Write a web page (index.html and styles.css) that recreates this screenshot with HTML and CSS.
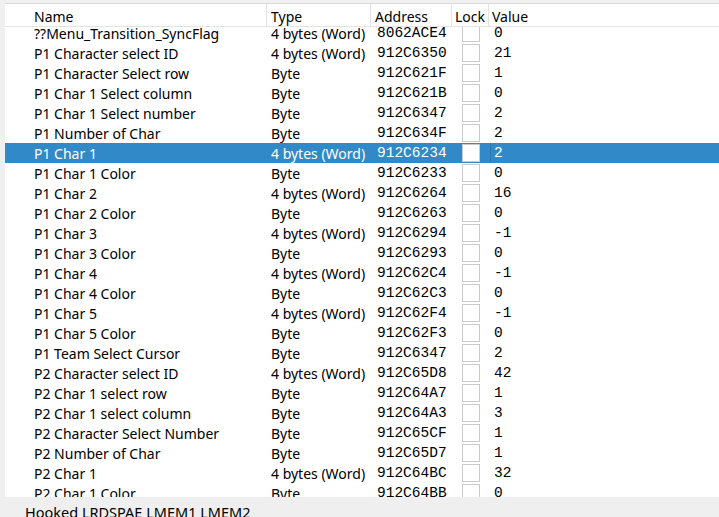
FILE: index.html
```html
<!DOCTYPE html>
<html>
<head>
<meta charset="utf-8">
<link rel="stylesheet" href="styles.css">
</head>
<body>
<div class="window">
  <div class="list">
    <div class="header">
      <div class="hcell c-name">Name</div>
      <div class="hcell c-type">Type</div>
      <div class="hcell c-addr">Address</div>
      <div class="hcell c-lock">Lock</div>
      <div class="hcell c-val">Value</div>
    </div>
    <div class="body">
      <div class="rows">
        <div class="row"><div class="cell c-name">??Menu_Transition_SyncFlag</div><div class="cell c-type">4 bytes (Word)</div><div class="cell c-addr">8062ACE4</div><div class="cell c-lock"><span class="box"></span></div><div class="cell c-val">0</div></div>
        <div class="row"><div class="cell c-name">P1 Character select ID</div><div class="cell c-type">4 bytes (Word)</div><div class="cell c-addr">912C6350</div><div class="cell c-lock"><span class="box"></span></div><div class="cell c-val">21</div></div>
        <div class="row"><div class="cell c-name">P1 Character Select row</div><div class="cell c-type">Byte</div><div class="cell c-addr">912C621F</div><div class="cell c-lock"><span class="box"></span></div><div class="cell c-val">1</div></div>
        <div class="row"><div class="cell c-name">P1 Char 1 Select column</div><div class="cell c-type">Byte</div><div class="cell c-addr">912C621B</div><div class="cell c-lock"><span class="box"></span></div><div class="cell c-val">0</div></div>
        <div class="row"><div class="cell c-name">P1 Char 1 Select number</div><div class="cell c-type">Byte</div><div class="cell c-addr">912C6347</div><div class="cell c-lock"><span class="box"></span></div><div class="cell c-val">2</div></div>
        <div class="row"><div class="cell c-name">P1 Number of Char</div><div class="cell c-type">Byte</div><div class="cell c-addr">912C634F</div><div class="cell c-lock"><span class="box"></span></div><div class="cell c-val">2</div></div>
        <div class="row selected"><div class="cell c-name">P1 Char 1</div><div class="cell c-type">4 bytes (Word)</div><div class="cell c-addr">912C6234</div><div class="cell c-lock"><span class="box"></span></div><div class="cell c-val focus">2</div></div>
        <div class="row"><div class="cell c-name">P1 Char 1 Color</div><div class="cell c-type">Byte</div><div class="cell c-addr">912C6233</div><div class="cell c-lock"><span class="box"></span></div><div class="cell c-val">0</div></div>
        <div class="row"><div class="cell c-name">P1 Char 2</div><div class="cell c-type">4 bytes (Word)</div><div class="cell c-addr">912C6264</div><div class="cell c-lock"><span class="box"></span></div><div class="cell c-val">16</div></div>
        <div class="row"><div class="cell c-name">P1 Char 2 Color</div><div class="cell c-type">Byte</div><div class="cell c-addr">912C6263</div><div class="cell c-lock"><span class="box"></span></div><div class="cell c-val">0</div></div>
        <div class="row"><div class="cell c-name">P1 Char 3</div><div class="cell c-type">4 bytes (Word)</div><div class="cell c-addr">912C6294</div><div class="cell c-lock"><span class="box"></span></div><div class="cell c-val">-1</div></div>
        <div class="row"><div class="cell c-name">P1 Char 3 Color</div><div class="cell c-type">Byte</div><div class="cell c-addr">912C6293</div><div class="cell c-lock"><span class="box"></span></div><div class="cell c-val">0</div></div>
        <div class="row"><div class="cell c-name">P1 Char 4</div><div class="cell c-type">4 bytes (Word)</div><div class="cell c-addr">912C62C4</div><div class="cell c-lock"><span class="box"></span></div><div class="cell c-val">-1</div></div>
        <div class="row"><div class="cell c-name">P1 Char 4 Color</div><div class="cell c-type">Byte</div><div class="cell c-addr">912C62C3</div><div class="cell c-lock"><span class="box"></span></div><div class="cell c-val">0</div></div>
        <div class="row"><div class="cell c-name">P1 Char 5</div><div class="cell c-type">4 bytes (Word)</div><div class="cell c-addr">912C62F4</div><div class="cell c-lock"><span class="box"></span></div><div class="cell c-val">-1</div></div>
        <div class="row"><div class="cell c-name">P1 Char 5 Color</div><div class="cell c-type">Byte</div><div class="cell c-addr">912C62F3</div><div class="cell c-lock"><span class="box"></span></div><div class="cell c-val">0</div></div>
        <div class="row"><div class="cell c-name">P1 Team Select Cursor</div><div class="cell c-type">Byte</div><div class="cell c-addr">912C6347</div><div class="cell c-lock"><span class="box"></span></div><div class="cell c-val">2</div></div>
        <div class="row"><div class="cell c-name">P2 Character select ID</div><div class="cell c-type">4 bytes (Word)</div><div class="cell c-addr">912C65D8</div><div class="cell c-lock"><span class="box"></span></div><div class="cell c-val">42</div></div>
        <div class="row"><div class="cell c-name">P2 Char 1 select row</div><div class="cell c-type">Byte</div><div class="cell c-addr">912C64A7</div><div class="cell c-lock"><span class="box"></span></div><div class="cell c-val">1</div></div>
        <div class="row"><div class="cell c-name">P2 Char 1 select column</div><div class="cell c-type">Byte</div><div class="cell c-addr">912C64A3</div><div class="cell c-lock"><span class="box"></span></div><div class="cell c-val">3</div></div>
        <div class="row"><div class="cell c-name">P2 Character Select Number</div><div class="cell c-type">Byte</div><div class="cell c-addr">912C65CF</div><div class="cell c-lock"><span class="box"></span></div><div class="cell c-val">1</div></div>
        <div class="row"><div class="cell c-name">P2 Number of Char</div><div class="cell c-type">Byte</div><div class="cell c-addr">912C65D7</div><div class="cell c-lock"><span class="box"></span></div><div class="cell c-val">1</div></div>
        <div class="row"><div class="cell c-name">P2 Char 1</div><div class="cell c-type">4 bytes (Word)</div><div class="cell c-addr">912C64BC</div><div class="cell c-lock"><span class="box"></span></div><div class="cell c-val">32</div></div>
        <div class="row"><div class="cell c-name">P2 Char 1 Color</div><div class="cell c-type">Byte</div><div class="cell c-addr">912C64BB</div><div class="cell c-lock"><span class="box"></span></div><div class="cell c-val">0</div></div>
      </div>
    </div>
  </div>
  <div class="status">Hooked LRDSPAE LMEM1 LMEM2</div>
</div>
</body>
</html>
```
FILE: styles.css
```css
html, body {
  margin: 0;
  padding: 0;
  width: 719px;
  height: 517px;
  overflow: hidden;
  background: #f0f0f0;
}
.window {
  display: flex;
  flex-direction: column;
  height: 517px;
  font-family: "Noto Sans", "Open Sans", sans-serif;
  font-size: 14px;
  color: #000;
}
.list {
  margin: 3px 0 0 5px;
  height: 493px;
  display: flex;
  flex-direction: column;
  background: #fff;
  border-top: 1px solid #dadada;
  overflow: hidden;
  flex: none;
}
.header {
  display: grid;
  grid-template-columns: 262px 104px 81px 37px 1fr;
  height: 22px;
  border-bottom: 1px solid #e3e3e3;
  background: #fff;
  position: relative;
  z-index: 1;
  flex: none;
}
.hcell {
  line-height: 19px;
  padding-top: 3px;
  padding-left: 3px;
  border-right: 1px solid #e3e3e3;
  white-space: nowrap;
  overflow: hidden;
}
.hcell.c-type, .hcell.c-addr { padding-left: 4px; }
.hcell.c-val { border-right: none; }
.body {
  flex: 1;
  overflow: hidden;
}
.rows {
  margin-top: -4px;
}
.row {
  display: grid;
  grid-template-columns: 262px 104px 81px 37px 1fr;
  height: 20px;
}
.cell {
  white-space: nowrap;
  overflow: hidden;
  padding-top: 1px;
  line-height: 19px;
}
.c-name { padding-left: 29px; }
.cell.c-type { padding-left: 4px; }
.cell.c-addr {
  padding-left: 6px;
  font-family: "Liberation Mono", "Courier New", monospace;
  font-size: 14.5px;
}
.cell.c-val {
  padding-left: 5px;
  font-family: "Liberation Mono", "Courier New", monospace;
  font-size: 14.5px;
}
.cell.c-lock {
  padding-top: 0;
  padding-left: 10px;
  display: flex;
  align-items: center;
}
.box {
  width: 16px;
  height: 16px;
  border: 1px solid #cacaca;
  background: #fff;
}
.row.selected {
  background: #318ac7;
  color: #fff;
}
.cell.focus {
  box-shadow: inset 1px 0 0 #2a78b0;
  padding-left: 4px;
  margin-left: 1px;
}
.status {
  flex: 1;
  background: #efefef;
  padding: 5px 0 0 25px;
  font-size: 14.5px;
  line-height: 20px;
  white-space: nowrap;
  overflow: hidden;
}
```
